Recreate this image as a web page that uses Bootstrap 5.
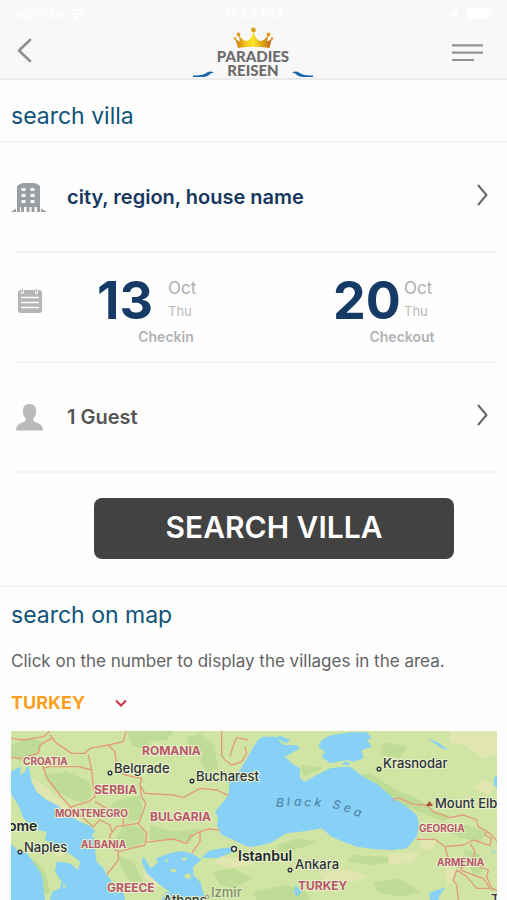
<!DOCTYPE html>
<html lang="en">
<head>
<meta charset="utf-8">
<meta name="viewport" content="width=device-width, initial-scale=1">
<title>Paradies Reisen</title>
<link href="https://cdn.jsdelivr.net/npm/bootstrap@5.3.0/dist/css/bootstrap.min.css" rel="stylesheet">
<style>
body{font-family:Inter,"Liberation Sans",sans-serif;background:#fefefe;color:#58595b}
svg{display:block;flex:none}
.topbar{background:#f8f8f8;border-bottom:2px solid #ebebeb}
.status{font-size:14px;line-height:27px;color:#fff}
.status>*,.brandrow>*{flex:1 1 0}
.plain{background:none;border:0;padding:0;color:inherit;text-align:left}
.sec-title{font-size:23px;line-height:32px;font-weight:400;color:#0e5379;margin:0}
.head{padding-top:20px;padding-bottom:9px}
.gutter{padding-left:11px;padding-right:10px}
.hairline{border-bottom:2px solid #f3f3f3}
.field-row{margin:0 11px 0 15px;min-height:110px}
.field-btn{min-height:108px;padding-right:8px}
.icon-slot{width:52px;flex:none}
.icon-slot svg{overflow:visible}
.place{font-size:20px;font-weight:600;color:#17375f}
.guest{font-size:20px;font-weight:600;color:#555}
.date-block{width:138px}
.day{width:71px;font-size:52px;line-height:48px;font-weight:700;color:#153a66}
.month{font-size:17px;line-height:23px;color:#aeaeae}
.wday{font-size:13px;line-height:23px;color:#b8b8b8}
.caption{font-size:14px;line-height:16px;font-weight:600;color:#b2b2b2}
.dates{padding-left:30px;padding-right:25px}
.go-wrap{padding:25px 53px 26px 94px}
.go{background:#424242;color:#fff;font-size:30px;line-height:36px;font-weight:600;border:0;border-radius:8px;padding:11px 0 14px}
.go:hover{background:#333;color:#fff}
.hint{font-size:17px;line-height:24px;color:#636363;margin:0;padding:18px 0 2px}
.country{appearance:none;border:0;background:none;padding:0;width:104px;font-size:18px;line-height:24px;font-weight:700;color:#f9a01f}
.map{width:100%;height:auto}
.map text{paint-order:stroke;stroke-width:2px;stroke:#e9efcb}
.cn{font-size:12px;font-weight:700;fill:#b8586a}
.cs{font-size:10px;font-weight:700;fill:#b8586a}
.ct{font-size:13px;font-weight:500;fill:#2c3338}
.cb{font-size:14px;font-weight:600;fill:#20262a}
.map .sea{font-size:12px;font-weight:500;font-style:italic;fill:#5288a8;stroke:none}
</style>
<script src="https://cdn.jsdelivr.net/npm/bootstrap@5.3.0/dist/js/bootstrap.bundle.min.js"></script>
</head>
<body>
<header class="topbar">
  <div class="status d-flex px-3">
    <div class="d-flex align-items-center gap-1"><span>sunrise</span>
      <svg width="17" height="12" viewBox="0 0 17 12" fill="none" stroke="#fff" stroke-width="2" aria-hidden="true"><path d="M1 4.500Q8.500-2 16 4.500M4 7.500Q8.500 3.500 13 7.500"/><circle cx="8.500" cy="10" r="1"/></svg>
    </div>
    <div class="text-center">11:43 PM</div>
    <div class="d-flex align-items-center justify-content-end gap-2">
      <svg width="10" height="10" viewBox="0 0 10 10" fill="#fff" aria-hidden="true"><path d="M0 5 10 0 6 10 5 5z"/></svg>
      <svg width="24" height="11" viewBox="0 0 24 11" fill="#fff" aria-hidden="true"><rect width="22" height="11" rx="3"/><rect x="23" y="4" width="1" height="4"/></svg>
    </div>
  </div>
  <div class="brandrow d-flex align-items-center px-3">
    <div><button class="plain" aria-label="Back"><svg width="17" height="26" viewBox="0 0 17 26" fill="none" stroke="#8f8f8f" stroke-width="2.600" stroke-linecap="round" stroke-linejoin="round"><path d="M14 3 3 13.500 14 24"/></svg></button></div>
    <a href="#" class="d-flex justify-content-center" aria-label="Paradies Reisen">
      <svg width="120" height="51" viewBox="0 0 120 51">
        <defs><linearGradient id="gold"><stop offset="0" stop-color="#c87a13"/><stop offset=".3" stop-color="#f5c819"/><stop offset=".5" stop-color="#fbe32a"/><stop offset=".72" stop-color="#e8a816"/><stop offset="1" stop-color="#b9651b"/></linearGradient></defs>
        <path d="M42 11Q45 15 47 14L45.500 8Q50 14 54 14Q59 12 60.500 4Q62 12 67 14Q71 14 75.500 8L74 14Q76 15 79 11L76.500 21Q60 18.500 45 21z" fill="url(#gold)"/>
        <g fill="#dd9c1d"><circle cx="60.500" cy="3" r="2.400"/><circle cx="45.500" cy="7.500" r="1.900"/><circle cx="75.500" cy="7.500" r="1.900"/><circle cx="42" cy="11.500" r="1.300"/><circle cx="79" cy="11.500" r="1.300"/></g>
        <text x="60" y="35" text-anchor="middle" font-family="Lato,sans-serif" font-weight="900" font-size="15" fill="#6c6c6c">PARADIES</text>
        <text x="60" y="49" text-anchor="middle" font-family="Lato,sans-serif" font-weight="900" font-size="15" fill="#6c6c6c">REISEN</text>
        <path d="M0 48.500Q10 49 14 45.500Q17 43.500 21 45.500Q18 45.500 16 48Q13 50.500 9 50H0z" fill="#1767ab"/>
        <path d="M120 48.500Q110 49 106 45.500Q103 43.500 99 45.500Q102 45.500 104 48Q107 50.500 111 50H120z" fill="#1767ab"/>
      </svg>
    </a>
    <div class="d-flex justify-content-end"><button class="plain me-2" aria-label="Menu"><svg width="31" height="18" viewBox="0 0 31 18" stroke="#929292" stroke-width="2.200"><path d="M0 1.400H31M0 8.700H31M0 16H22"/></svg></button></div>
  </div>
</header>
<main>
  <div class="hairline gutter head"><h1 class="sec-title">search villa</h1></div>
  <div class="field-row hairline">
    <button class="plain field-btn w-100 d-flex align-items-center">
      <span class="icon-slot"><svg width="29" height="30" viewBox="0 0 29 30" fill="#9a9fa1"><path fill-rule="evenodd" d="M2 30V4L5 2 8 1H19L22 2 25 4V30H22V25H19.500V30H16.500V25H14.500V30H11.500V25H9V30H6V25H5V30zM6.500 6V9H10.500V6zM15.500 6V9H19.500V6zM6.500 12V15H10.500V12zM15.500 12V15H19.500V12zM6.500 18V21H10.500V18zM15.500 18V21H19.500V18z"/><path d="M-4 30 1 26.500V30zM26 26.500 32 30H26z"/></svg></span>
      <span class="place flex-grow-1">city, region, house name</span>
      <svg width="11" height="22" viewBox="0 0 11 22" fill="none" stroke="#666" stroke-width="2" class="mb-1"><path d="M1 1 9.500 11 1 21"/></svg>
    </button>
  </div>
  <div class="field-row hairline d-flex align-items-center">
    <span class="icon-slot"><svg width="29" height="28" viewBox="0 0 29 28" class="mb-3"><path fill="#b5b5b5" d="M6 5V8Q7 10 9 8V5H20V8Q21 10 23 8V5H24Q27 5 27 8V25Q27 28 24 28H6Q3 28 3 25V8Q3 5 6 5z"/><path d="M7.500 4V7.500M21.500 4V7.500" stroke="#b5b5b5" stroke-width="1.600"/><path d="M6 12.500H24M6 17.500H24M6 22.500H24" stroke="#fff" stroke-width="1.700"/></svg></span>
    <div class="dates flex-grow-1 d-flex justify-content-between">
      <button class="plain date-block pt-2"><span class="d-flex"><span class="day">13</span><span><span class="month d-block">Oct</span><span class="wday d-block">Thu</span></span></span><span class="caption d-block text-center pt-1">Checkin</span></button>
      <button class="plain date-block pt-2"><span class="d-flex"><span class="day">20</span><span><span class="month d-block">Oct</span><span class="wday d-block">Thu</span></span></span><span class="caption d-block text-center pt-1">Checkout</span></button>
    </div>
  </div>
  <div class="field-row hairline">
    <button class="plain field-btn w-100 d-flex align-items-center">
      <span class="icon-slot"><svg width="29" height="27" viewBox="0 0 29 27" fill="#bababa"><path d="M8 6Q8 0 14.500 0T21 6V9Q21 12 18.500 14V17Q20 18 23 19Q28 21 28 26.500H1Q1 21 6 19Q9 18 10.500 17V14Q8 12 8 9z"/></svg></span>
      <span class="guest flex-grow-1">1 Guest</span>
      <svg width="11" height="22" viewBox="0 0 11 22" fill="none" stroke="#666" stroke-width="2" class="mb-1"><path d="M1 1 9.500 11 1 21"/></svg>
    </button>
  </div>
  <div class="go-wrap hairline"><button class="btn go w-100">SEARCH VILLA</button></div>
  <section class="gutter">
    <h2 class="sec-title pt-2 mt-1">search on map</h2>
    <p class="hint">Click on the number to display the villages in the area.</p>
    <div class="d-flex align-items-center pt-3 pb-3">
      <select class="country" aria-label="Country"><option>TURKEY</option></select>
      <svg width="12" height="8" viewBox="0 0 12 8" fill="none" stroke="#cf2f49" stroke-width="2" aria-hidden="true"><path d="M1 1.500 6 6.500 11 1.500"/></svg>
    </div>
    <svg class="map" viewBox="0 0 486 169" role="img" aria-label="Map of the Black Sea region">
      <rect width="486" height="169" fill="#d0e5a4"/>
      <g transform="scale(.33333) translate(-33 -18)">
        <g fill="#bedc95">
          <path d="M380 18H520L500 45 450 50 440 75 395 60zM560 35 600 25 640 60 655 130 620 140 600 110 610 80 570 70zM33 60 90 40 130 50 110 90 60 110 33 90z"/>
          <path d="M130 150 200 140 270 170 275 215 250 235 200 215 160 190zM340 230 420 210 430 270 400 290 360 270 330 250zM370 300 430 310 435 350 380 375 345 345zM450 300 520 320 600 310 570 350 500 345 450 345z"/>
          <path d="M1070 155 1110 145 1190 195 1260 225 1300 260 1350 270 1330 290 1260 260 1190 235 1130 185zM1150 50 1220 65 1200 100 1140 90zM1340 310 1400 300 1460 325 1440 350 1380 340zM1390 370 1440 390 1450 440 1420 450 1400 410z"/>
          <path d="M830 360 900 340 950 350 900 370 840 385zM1060 390 1150 395 1250 380 1210 405 1120 420 1040 410zM640 440 700 430 760 460 700 490 660 480zM350 390 400 410 430 470 400 480 370 440zM100 400 135 440 150 500 135 510 110 450zM900 120 950 125 970 130 910 155z"/>
          <path d="M760 500 860 480 920 500 930 525H770zM1120 470 1200 460 1260 500 1200 515 1130 500z"/>
        </g>
        <g fill="#e1e5b0">
          <path d="M90 160 130 180 200 240 250 290 230 290 180 250 120 220zM1350 18H1491V90L1450 100 1400 65 1350 50zM1160 385 1260 380 1240 410 1170 420zM660 395 740 400 760 420 690 430 640 415zM1330 400 1370 410 1360 470 1340 480zM1260 330 1310 345 1300 375 1260 370z"/>
          <path d="M440 420 460 450 490 480 460 490 430 450zM1420 190 1450 160 1480 180 1470 210zM150 360 200 390 170 400zM950 440 1040 435 1110 455 1060 470 970 465z"/>
        </g>
        <g fill="#86d1f5">
          <path d="M33 140 50 130 62 125 60 150 75 140 85 118 95 170 110 200 140 225 170 240 200 265 240 290 275 305 285 320 275 330 290 350 285 380 290 410 310 430 320 450 345 480 370 500 375 525H150L157 500 180 490 185 470 165 440 170 410 210 415 235 435 240 410 215 390 180 370 135 345 140 320 110 315 70 280 60 250 45 225 33 205z"/>
          <path d="M33 355 50 375 80 385 100 410 120 440 130 465 130 490 135 525H33z"/>
          <path d="M750 85 770 50 785 35 825 35 850 60 890 60 900 70 855 95 875 115 900 130 900 160 915 170 950 150 990 130 1030 125 1050 125 1090 155 1135 180 1180 220 1220 245 1250 270 1258 300 1250 335 1220 370 1180 375 1120 372 1070 365 1030 350 995 335 965 310 920 318 860 325 810 355 750 367 720 355 690 340 665 330 650 300 655 280 645 260 670 230 685 210 690 160 720 135 735 110z"/>
          <path d="M965 45 995 30 1050 22 1100 22 1115 40 1100 45 1115 65 1085 75 1090 100 1060 110 1040 105 1015 110 990 115 965 95 975 80 955 65z"/>
          <path d="M605 398 625 378 665 370 715 365 690 385 650 400z"/>
          <path d="M453 430 475 412 468 400 510 385 545 378 577 387 605 403 580 425 580 450 600 470 612 510 610 525H485L500 500 515 505 480 480 440 445 425 410 430 395z"/>
          <path d="M885 480 905 500 890 515 882 500zM1288 505 1310 495 1335 488 1320 510 1315 525H1290zM1482 155H1491V190L1482 180zM1285 42 1310 50 1345 75 1325 70zM1470 370 1491 385 1480 382z"/>
          <path d="M825 38 840 32 870 45 860 55zM1035 108 1050 115 1045 120 1025 118z"/>
        </g>
        <g fill="#cde5a0"><path d="M545 400 560 395 560 405 550 408zM510 435 525 430 530 440 515 442zM550 450 570 445 575 460 560 462zM495 405 505 402 503 415zM190 475 200 485 190 490z"/></g>
        <g fill="none" stroke="#e39a7d" stroke-width="4" stroke-linejoin="round">
          <path d="M33 40 70 45 130 35 150 18M150 30 170 55 215 85 255 85 270 70 325 60 370 50 378 18M155 40 120 60 115 85 60 100 33 98M125 95 130 130 150 125 235 125 275 135 265 90M130 130 145 165 180 210 210 245 245 275M275 135 280 190 285 215 265 230 215 245 205 260M325 60 345 80 350 130 375 150 425 160 420 180 435 205 520 210 550 218 600 190 650 195 685 212M420 180 425 215 437 235 430 260 415 295 350 305 330 330 330 360 355 380 435 360 440 325 415 295M285 230 335 260 370 275 370 300M245 275 280 305 300 285 330 300 335 320M435 352 520 342 560 355 570 335 600 320 625 312 658 315M600 320 600 350 575 385M355 380 355 405 320 450M665 18V90L675 105 695 120 725 110 740 85 735 65M690 95 700 60 710 38 745 45"/>
          <path d="M1182 230V220H1200L1240 238 1280 240 1300 260 1350 278 1390 270 1430 285 1435 305 1470 325 1491 348M1250 343H1305L1335 365 1345 400 1360 420 1390 430M1335 365 1390 360 1420 345 1470 362 1475 340 1455 330 1460 320M1410 355 1425 380 1420 400 1440 425 1465 435 1460 455 1475 490 1430 490 1400 455 1370 435 1360 465 1370 480 1375 525M1380 435 1420 450 1450 460 1470 490 1491 495"/>
        </g>
      </g>
      <g class="cs"><text x="12" y="34">CROATIA</text><text x="44" y="86">MONTENEGRO</text><text x="70" y="117">ALBANIA</text><text x="408" y="101">GEORGIA</text><text x="426" y="135">ARMENIA</text></g>
      <g class="cn"><text x="131" y="24">ROMANIA</text><text x="83" y="63">SERBIA</text><text x="139" y="90">BULGARIA</text><text x="96" y="161">GREECE</text><text x="287" y="159">TURKEY</text></g>
      <g class="ct"><text x="103" y="42">Belgrade</text><text x="185" y="50">Bucharest</text><text x="13" y="121">Naples</text><text x="372" y="37">Krasnodar</text><text x="284" y="138">Ankara</text><text x="424" y="77">Mount Elbrus</text><text x="152" y="174">Athens</text><text x="480" y="173">Tehran</text></g>
      <g class="cb"><text x="-12" y="100">Rome</text><text x="227" y="130">Istanbul</text></g>
      <text class="ct" x="200" y="166" opacity=".5">Izmir</text>
      <text class="sea" x="265 276 283 293 303 321 332 342" y="76 75 75 75 75 77 80 84" rotate="0 -2 0 5 8 12 16 18">BlackSea</text>
      <g fill="#fff" stroke="#333a3e" stroke-width="1.500"><circle cx="99" cy="42" r="1.800"/><circle cx="181" cy="50" r="1.800"/><circle cx="9" cy="121" r="1.800"/><circle cx="368" cy="38" r="1.800"/><circle cx="279" cy="139" r="1.800"/><circle cx="223" cy="118" r="2.400"/></g>
      <circle cx="196" cy="166" r="1.800" fill="none" stroke="#999"/>
      <path d="M415 75 418.500 70 422 75z" fill="#a5523a"/>
    </svg>
  </section>
</main>
</body>
</html>
